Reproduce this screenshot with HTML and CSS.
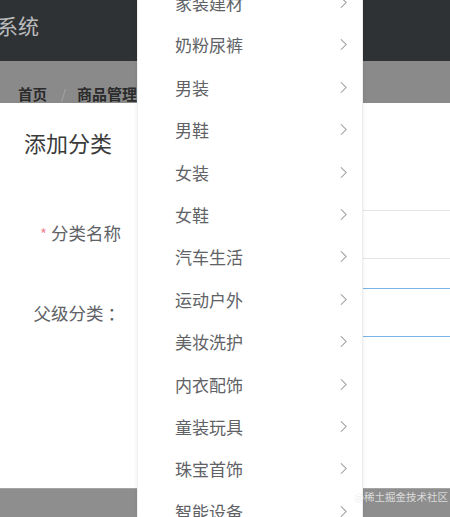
FILE: index.html
```html
<!DOCTYPE html>
<html lang="zh">
<head>
<meta charset="utf-8">
<link rel="stylesheet" href="styles.css">
</head>
<body>
<div class="page">
  <header class="topbar"><span class="brand">系统</span></header>
  <nav class="crumbs">
    <span class="crumb">首页</span>
    <span class="sep">/</span>
    <span class="crumb">商品管理</span>
  </nav>
  <main class="content">
    <h2 class="title">添加分类</h2>
    <div class="form">
      <div class="row row-name">
        <label class="label"><span class="star">*</span> 分类名称</label>
        <div class="input"></div>
      </div>
      <div class="row row-parent">
        <label class="label">父级分类<span class="colon">：</span></label>
        <div class="input focus"></div>
      </div>
    </div>
  </main>
  <footer class="bottom"></footer>

  <div class="dropdown">
    <ul class="menu">
      <li class="item"><span>家装建材</span><svg class="chev" viewBox="0 0 8 14"><path d="M1 1 L7 7 L1 13"/></svg></li>
      <li class="item"><span>奶粉尿裤</span><svg class="chev" viewBox="0 0 8 14"><path d="M1 1 L7 7 L1 13"/></svg></li>
      <li class="item"><span>男装</span><svg class="chev" viewBox="0 0 8 14"><path d="M1 1 L7 7 L1 13"/></svg></li>
      <li class="item"><span>男鞋</span><svg class="chev" viewBox="0 0 8 14"><path d="M1 1 L7 7 L1 13"/></svg></li>
      <li class="item"><span>女装</span><svg class="chev" viewBox="0 0 8 14"><path d="M1 1 L7 7 L1 13"/></svg></li>
      <li class="item"><span>女鞋</span><svg class="chev" viewBox="0 0 8 14"><path d="M1 1 L7 7 L1 13"/></svg></li>
      <li class="item"><span>汽车生活</span><svg class="chev" viewBox="0 0 8 14"><path d="M1 1 L7 7 L1 13"/></svg></li>
      <li class="item"><span>运动户外</span><svg class="chev" viewBox="0 0 8 14"><path d="M1 1 L7 7 L1 13"/></svg></li>
      <li class="item"><span>美妆洗护</span><svg class="chev" viewBox="0 0 8 14"><path d="M1 1 L7 7 L1 13"/></svg></li>
      <li class="item"><span>内衣配饰</span><svg class="chev" viewBox="0 0 8 14"><path d="M1 1 L7 7 L1 13"/></svg></li>
      <li class="item"><span>童装玩具</span><svg class="chev" viewBox="0 0 8 14"><path d="M1 1 L7 7 L1 13"/></svg></li>
      <li class="item"><span>珠宝首饰</span><svg class="chev" viewBox="0 0 8 14"><path d="M1 1 L7 7 L1 13"/></svg></li>
      <li class="item"><span>智能设备</span><svg class="chev" viewBox="0 0 8 14"><path d="M1 1 L7 7 L1 13"/></svg></li>
    </ul>
  </div>
  <div class="watermark">@稀土掘金技术社区</div>
</div>
</body>
</html>
```
FILE: styles.css
```css
* { box-sizing: border-box; }
html, body { margin: 0; padding: 0; }
body {
  width: 450px;
  height: 517px;
  overflow: hidden;
  font-family: "Noto Sans CJK SC", "Microsoft YaHei", sans-serif;
  background: #fff;
}
.page {
  position: relative;
  width: 450px;
  height: 517px;
  display: flex;
  flex-direction: column;
  overflow: hidden;
}
.topbar {
  height: 61px;
  flex: none;
  background: #2f3234;
  display: flex;
  align-items: center;
}
.brand {
  margin-left: -3px;
  font-size: 21px;
  line-height: 24px;
  color: #b9bbbc;
  margin-top: -12px;
}
.crumbs {
  height: 42px;
  flex: none;
  background: #8a8a8a;
  display: flex;
  align-items: flex-end;
  padding: 0 0 0 18px;
  font-size: 14.5px;
  line-height: 18px;
}
.crumb { color: #2b2b2b; font-weight: bold; }
.crumb + .sep + .crumb { font-size: 15px; }
.sep { color: #a8a8a8; margin: 0 11px 0 14px; font-size: 13px; }
.content {
  flex: 1;
  background: #fff;
  padding: 26px 0 0 24px;
}
.title {
  margin: 0;
  font-size: 22px;
  font-weight: normal;
  line-height: 26px;
  color: #3a3a3a;
}
.form {
  margin-top: 55px;
  display: flex;
  flex-direction: column;
  gap: 30px;
}
.row {
  display: flex;
  align-items: center;
  height: 48px;
}
.label {
  width: 97px;
  text-align: right;
  font-size: 17.5px;
  color: #606266;
  line-height: 20px;
  white-space: nowrap;
}
.colon { margin-left: 4px; margin-right: -4px; }
.row-name .label { margin-top: -2px; }
.row-parent .label { margin-top: 2px; }
.star { color: #f08a9a; font-size: 15px; }
.input {
  margin-left: 160px;
  flex: 1;
  height: 49px;
  border-top: 1px solid #e3e5ea;
  border-bottom: 1px solid #e3e5ea;
}
.input.focus {
  border-top-color: #79b4e8;
  border-bottom-color: #79b4e8;
}
.bottom {
  height: 29px;
  flex: none;
  background: #8e8e8e;
  border-top: 1px solid #a4a4a4;
}
.dropdown {
  position: absolute;
  left: 137px;
  top: 0;
  width: 226px;
  height: 517px;
  background: #fff;
  box-shadow: 0 0 4px rgba(0, 0, 0, 0.08);
  border-left: 1px solid #f0f0f0;
  border-right: 1px solid #eeeeee;
  overflow: hidden;
}
.menu {
  list-style: none;
  margin: -18.6px 0 0 0;
  padding: 0;
}
.item {
  height: 42.4px;
  display: flex;
  align-items: center;
  justify-content: space-between;
  padding: 0 15px 0 37px;
  font-size: 17px;
  color: #606266;
}
.chev {
  width: 7px;
  height: 13px;
  fill: none;
  stroke: #97999d;
  stroke-width: 1.2;
}
.watermark {
  position: absolute;
  left: 354px;
  top: 491px;
  font-size: 10.5px;
  line-height: 12px;
  color: rgba(235, 235, 235, 0.85);
  white-space: nowrap;
}
```
